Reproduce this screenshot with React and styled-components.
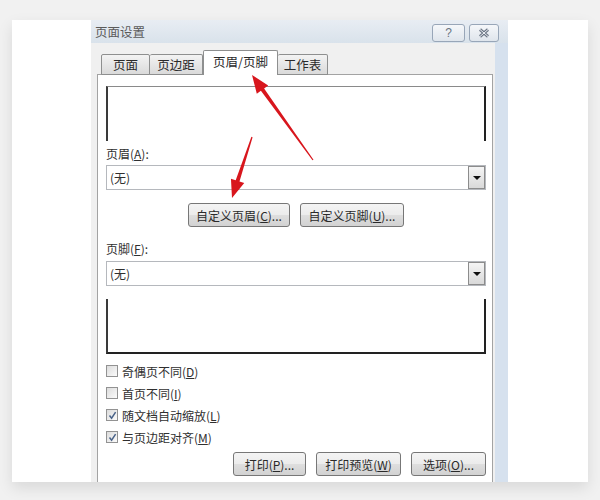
import React from "react";
import styled, { createGlobalStyle } from "styled-components";

const GlobalStyle = createGlobalStyle`
  html, body {
    margin: 0;
    padding: 0;
    background: #f1f1f1;
  }
  body {
    font-family: "Noto Sans CJK SC", "Liberation Sans", sans-serif;
    font-size: 12px;
    color: #2f2f2f;
  }
`;

const Page = styled.div`
  position: relative;
  width: 600px;
  height: 500px;
  overflow: hidden;
  padding-top: 20px;
  box-sizing: border-box;
`;

const Card = styled.div`
  margin: 0 12px;
  height: 462px;
  background: #ffffff;
  box-shadow: 0 6px 14px rgba(0, 0, 0, 0.1);
  padding-left: 79px;
  overflow: hidden;
`;

const Dialog = styled.div`
  width: 417px;
  height: 100%;
  display: flex;
  flex-direction: column;
`;

const TitleBar = styled.div`
  height: 23px;
  flex-shrink: 0;
  display: flex;
  align-items: center;
  justify-content: space-between;
  padding: 0 9px 0 4px;
  background: linear-gradient(#e8edf3, #d9e2eb);
  color: #5a5a5a;
  font-size: 12.5px;
`;

const TitleButtons = styled.div`
  display: flex;
  gap: 4px;
  margin-top: 2px;
`;

const TitleButton = styled.div`
  width: ${(p) => p.$w}px;
  height: 16px;
  border: 1px solid #98a6b8;
  border-radius: 3px;
  background: linear-gradient(#f5f7fa, #dfe5ec);
  display: flex;
  align-items: center;
  justify-content: center;
  color: #6a7482;
  font-size: 12px;
  font-family: "Liberation Sans", sans-serif;
`;

const Body = styled.div`
  flex: 1;
  background: #f0f0f0;
  padding: 8px 2px 0 6px;
  border-right: 13px solid #d6e1ee;
  display: flex;
  flex-direction: column;
`;

const TabRow = styled.div`
  display: flex;
  align-items: flex-end;
  height: 24px;
  padding-left: 4px;
  position: relative;
  z-index: 1;
  margin-bottom: -1px;
`;

const Tab = styled.div`
  width: ${(p) => p.$w}px;
  height: ${(p) => (p.$active ? 25 : 21)}px;
  box-sizing: border-box;
  border: 1px solid #8e8f8f;
  border-bottom: ${(p) => (p.$active ? "none" : "1px solid #8e8f8f")};
  border-left: ${(p) => (p.$first || p.$active ? "1px solid #8e8f8f" : "none")};
  border-radius: 2px 2px 0 0;
  background: ${(p) =>
    p.$active ? "#ffffff" : "linear-gradient(#f3f3f3, #dadada)"};
  display: flex;
  align-items: center;
  justify-content: center;
  padding-bottom: ${(p) => (p.$active ? 3 : 0)}px;
  font-size: 12.5px;
  color: #2a2a2a;
`;

const Panel = styled.div`
  flex: 1;
  background: #ffffff;
  border: 1px solid #a3a3a3;
  border-bottom: none;
  padding: 11px 6px 0 8px;
  display: flex;
  flex-direction: column;
`;

const Preview = styled.div`
  height: 55px;
  box-sizing: border-box;
  border-left: 2px solid #3a3a3a;
  border-right: 2px solid #222;
  ${(p) =>
    p.$top
      ? "border-top: 1px solid #8a8a8a; border-bottom: none;"
      : "border-bottom: 2px solid #222; border-top: none;"}
  margin-top: ${(p) => p.$mt || 0}px;
`;

const Label = styled.div`
  height: 14px;
  line-height: 14px;
  margin-top: ${(p) => p.$mt}px;
`;

const U = styled.span`
  text-decoration: underline;
  text-underline-offset: 1px;
`;

const Select = styled.div`
  height: 25px;
  margin-top: ${(p) => p.$mt}px;
  box-sizing: border-box;
  border: 1px solid #b5b8bd;
  display: flex;
  align-items: center;
  justify-content: space-between;
  padding-left: 3px;
`;

const DropButton = styled.div`
  width: 17px;
  height: 23px;
  box-sizing: border-box;
  border: 1px solid #8c8c8c;
  background: linear-gradient(#f5f5f5, #d9d9d9);
  display: flex;
  align-items: center;
  justify-content: center;
`;

const Triangle = styled.div`
  width: 0;
  height: 0;
  border-left: 4px solid transparent;
  border-right: 4px solid transparent;
  border-top: 4px solid #111;
`;

const ButtonRow = styled.div`
  display: flex;
  justify-content: ${(p) => p.$justify};
  gap: 10px;
  margin-top: ${(p) => p.$mt}px;
`;

const Button = styled.div`
  width: ${(p) => p.$w}px;
  height: 24px;
  box-sizing: border-box;
  border: 1px solid #777;
  border-radius: 3px;
  background: linear-gradient(#f4f4f4 0%, #ececec 48%, #dedede 52%, #d2d2d2 100%);
  display: flex;
  align-items: center;
  justify-content: center;
  font-size: 12px;
  color: #2a2a2a;
`;

const CheckList = styled.div`
  margin-top: 6px;
  display: flex;
  flex-direction: column;
`;

const CheckRow = styled.div`
  height: 22px;
  display: flex;
  align-items: center;
  gap: 4px;
`;

const Box = styled.div`
  width: 12px;
  height: 12px;
  box-sizing: border-box;
  border: 1px solid #929292;
  background: linear-gradient(135deg, #dcdcdc, #fbfbfb);
  display: flex;
  align-items: center;
  justify-content: center;
`;

const Overlay = styled.svg`
  position: absolute;
  left: 0;
  top: 0;
  pointer-events: none;
`;

const Check = ({ checked, children }) => (
  <CheckRow>
    <Box>
      {checked && (
        <svg width="9" height="9" viewBox="0 0 9 9">
          <path d="M1.5 4.5 L3.6 7.2 L7.6 1.2" fill="none" stroke="#4a6389" strokeWidth="1.5" />
        </svg>
      )}
    </Box>
    <span>{children}</span>
  </CheckRow>
);

const Dropdown = ({ mt }) => (
  <Select $mt={mt}>
    <span>(无)</span>
    <DropButton>
      <Triangle />
    </DropButton>
  </Select>
);

const App = () => {
  return (
    <Page>
      <GlobalStyle />
      <Card>
        <Dialog>
          <TitleBar>
            <span>页面设置</span>
            <TitleButtons>
              <TitleButton $w={31}>?</TitleButton>
              <TitleButton $w={28}>
                <svg width="12" height="10" viewBox="0 0 12 10">
                  <path d="M2 1.5 L10 8.5 M10 1.5 L2 8.5" stroke="#6d7786" strokeWidth="3" />
                  <path d="M2 1.5 L10 8.5 M10 1.5 L2 8.5" stroke="#eef1f5" strokeWidth="1" />
                </svg>
              </TitleButton>
            </TitleButtons>
          </TitleBar>
          <Body>
            <TabRow>
              <Tab $w={49} $first>页面</Tab>
              <Tab $w={53}>页边距</Tab>
              <Tab $w={75} $active>页眉/页脚</Tab>
              <Tab $w={50}>工作表</Tab>
            </TabRow>
            <Panel>
              <Preview $top />
              <Label $mt={6}>
                页眉(<U>A</U>):
              </Label>
              <Dropdown mt={4} />
              <ButtonRow $justify="center" $mt={13}>
                <Button $w={102}>
                  自定义页眉(<U>C</U>)...
                </Button>
                <Button $w={104}>
                  自定义页脚(<U>U</U>)...
                </Button>
              </ButtonRow>
              <Label $mt={15}>
                页脚(<U>F</U>):
              </Label>
              <Dropdown mt={5} />
              <Preview $mt={13} />
              <CheckList>
                <Check>
                  奇偶页不同(<U>D</U>)
                </Check>
                <Check>
                  首页不同(<U>I</U>)
                </Check>
                <Check checked>
                  随文档自动缩放(<U>L</U>)
                </Check>
                <Check checked>
                  与页边距对齐(<U>M</U>)
                </Check>
              </CheckList>
              <ButtonRow $justify="flex-end" $mt={4}>
                <Button $w={73}>
                  打印(<U>P</U>)...
                </Button>
                <Button $w={85}>
                  打印预览(<U>W</U>)
                </Button>
                <Button $w={75}>
                  选项(<U>O</U>)...
                </Button>
              </ButtonRow>
            </Panel>
          </Body>
        </Dialog>
      </Card>
      {/* red annotation arrows drawn over the dialog */}
      <Overlay width="600" height="500" viewBox="0 0 600 500">
        <polygon
          fill="#d8161d"
          points="313.5,159.65 264.1,88.4 268.2,85.5 252,75 256.8,93.7 260.9,90.8 312.5,160.35"
        />
        <polygon
          fill="#d8161d"
          points="252.6,137.2 239.5,181.5 244.25,183.1 232,198 230.95,178.7 235.7,180.3 251.4,136.8"
        />
      </Overlay>
    </Page>
  );
};

export default App;
